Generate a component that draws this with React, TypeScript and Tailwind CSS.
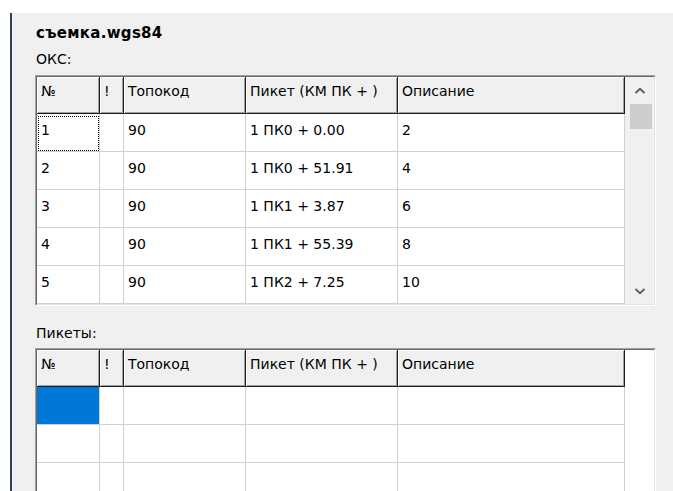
import type { ReactNode } from 'react';

type Row = { no: string; flag: string; code: string; picket: string; descr: string };

const OKS_ROWS: Row[] = [
  { no: '1', flag: '', code: '90', picket: '1 ПК0 + 0.00', descr: '2' },
  { no: '2', flag: '', code: '90', picket: '1 ПК0 + 51.91', descr: '4' },
  { no: '3', flag: '', code: '90', picket: '1 ПК1 + 3.87', descr: '6' },
  { no: '4', flag: '', code: '90', picket: '1 ПК1 + 55.39', descr: '8' },
  { no: '5', flag: '', code: '90', picket: '1 ПК2 + 7.25', descr: '10' },
];

const EMPTY_ROWS: Row[] = Array.from({ length: 4 }, () => ({
  no: '',
  flag: '',
  code: '',
  picket: '',
  descr: '',
}));

// column widths include the 1px right grid line
const COLS = [
  { title: '№', w: 'w-[63px]' },
  { title: '!', w: 'w-[24px]' },
  { title: 'Топокод', w: 'w-[122px]' },
  { title: 'Пикет (КМ ПК + )', w: 'w-[152px]' },
  { title: 'Описание', w: 'w-[227px]' },
];

function Chevron({ down }: { down?: boolean }) {
  return (
    <svg width="12" height="8" viewBox="0 0 12 8" fill="none">
      <path
        d={down ? 'M1.5 2L6 6.2L10.5 2' : 'M1.5 6L6 1.8L10.5 6'}
        stroke="#606060"
        strokeWidth="2"
      />
    </svg>
  );
}

function ScrollBar() {
  return (
    <div className="w-[29px] bg-[#f0f0f0] flex flex-col items-center">
      <div className="h-[27px] w-full flex items-center justify-center pt-[1px]">
        <Chevron />
      </div>
      <div className="w-[22px] h-[25px] bg-[#cdcdcd] ml-[2px]" />
      <div className="flex-1" />
      <div className="h-[27px] w-full flex items-center justify-center">
        <Chevron down />
      </div>
    </div>
  );
}

function Grid({
  rows,
  scroll,
  focusFirst,
  selectFirst,
}: {
  rows: Row[];
  scroll?: boolean;
  focusFirst?: boolean;
  selectFirst?: boolean;
}) {
  return (
    <div className="w-[621px] border border-t-[#a0a0a0] border-l-[#a0a0a0] border-r-white border-b-white">
      <div className="flex bg-white border border-t-[#696969] border-l-[#696969] border-r-[#e3e3e3] border-b-[#e3e3e3]">
        <div className="flex flex-col">
          {/* header */}
          <div className="flex">
            {COLS.map((c) => (
              <div
                key={c.title}
                className={`${c.w} h-[37px] bg-[#f0f0f0] border-r border-b border-[#1f1f1f] shadow-[inset_1px_1px_0_#ffffff,inset_-1px_-1px_0_#a0a0a0] pl-[4px] pt-[6px] text-[14px] leading-[16px] whitespace-nowrap`}
              >
                {c.title}
              </div>
            ))}
          </div>
          {/* body */}
          {rows.map((r, i) => {
            const cells: ReactNode[] = [r.no, r.flag, r.code, r.picket, r.descr];
            return (
              <div key={i} className="flex">
                {cells.map((v, j) => {
                  const selected = selectFirst && i === 0 && j === 0;
                  const focused = focusFirst && i === 0 && j === 0;
                  return (
                    <div
                      key={j}
                      className={`${COLS[j].w} h-[38px] border-r border-b border-[#d0d0d0] relative`}
                    >
                      <div
                        className={`h-full pl-[4px] pt-[8px] text-[14px] leading-[16px] whitespace-nowrap ${
                          selected ? 'bg-[#0078d7]' : ''
                        }`}
                      >
                        {v}
                      </div>
                      {focused && (
                        <div className="absolute left-[1px] top-[2px] right-0 bottom-0 border border-dotted border-black" />
                      )}
                    </div>
                  );
                })}
              </div>
            );
          })}
        </div>
        {scroll ? <ScrollBar /> : <div className="w-[29px] bg-white" />}
      </div>
    </div>
  );
}

export default function App() {
  return (
    <div className="w-[673px] h-[491px] bg-white overflow-hidden flex flex-col font-['DejaVu_Sans',sans-serif] text-black">
      <div className="h-[13px] bg-white shrink-0" />
      <div className="flex flex-1 min-h-0">
        <div className="w-[10px] bg-white" />
        <div className="w-[2px] bg-[#34405a]" />
        <div className="flex-1 bg-[#f0f0f0] pl-[23px] pt-[12px] overflow-hidden">
          <div className="pl-[1px] text-[15px] leading-[16px] font-bold tracking-[0.3px]">съемка.wgs84</div>
          <div className="pl-[1px] mt-[10px] text-[14px] leading-[16px]">ОКС:</div>
          <div className="mt-[8px]">
            <Grid rows={OKS_ROWS} scroll focusFirst />
          </div>
          <div className="pl-[1px] mt-[19px] text-[14px] leading-[16px]">Пикеты:</div>
          <div className="mt-[7px]">
            <Grid rows={EMPTY_ROWS} selectFirst />
          </div>
        </div>
      </div>
    </div>
  );
}
